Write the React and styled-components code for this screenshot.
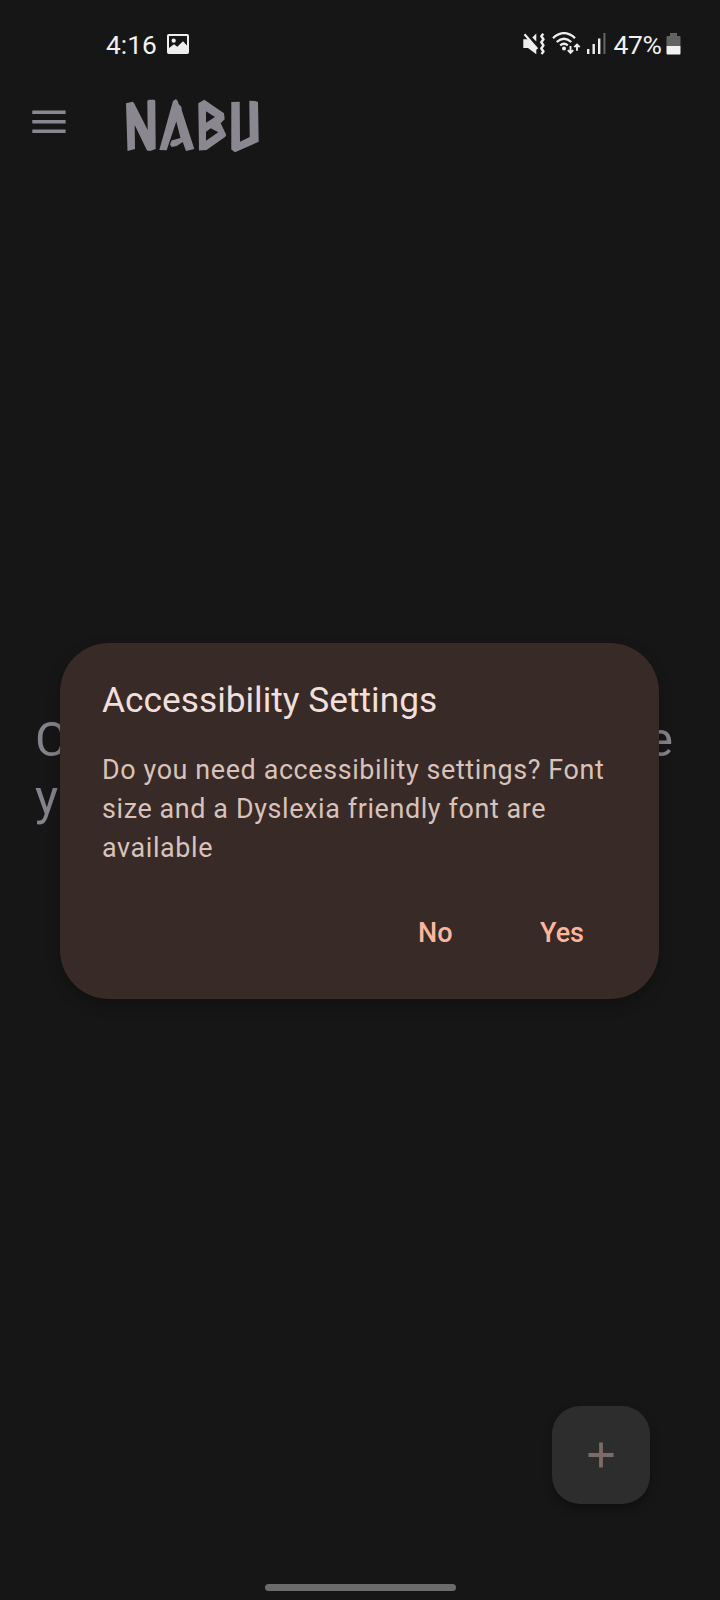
import React from "react";
import styled, { createGlobalStyle } from "styled-components";

const Global = createGlobalStyle`
  * { box-sizing: border-box; }
  body { margin: 0; background: #161616; font-family: Roboto, "Liberation Sans", sans-serif; }
`;

const Screen = styled.div`
  position: relative;
  width: 720px;
  height: 1600px;
  overflow: hidden;
  background: #161616;
  display: flex;
  flex-direction: column;
`;

const StatusBar = styled.div`
  height: 88px;
  flex: none;
  display: flex;
  align-items: center;
  padding: 0 39.5px 1px 106px;
  color: #f1f1f1;
  font-size: 26.3px;
`;

const Clock = styled.span`
  width: 51px;
  padding-top: 2px;
  white-space: nowrap;
`;

const StatusIcons = styled.div`
  margin-left: auto;
  display: flex;
  align-items: center;
`;

const Percent = styled.span`
  width: 49px;
  margin: 0 3px 0 8px;
  padding-top: 2px;
  font-size: 26.5px;
  letter-spacing: -0.4px;
`;

const Glyph = styled.svg`
  display: block;
  flex: none;
  margin-left: ${(p) => p.$gap || 0}px;
`;

const AppBar = styled.header`
  height: 76px;
  flex: none;
  display: flex;
  align-items: center;
  padding-left: 32px;
  color: #8b8790;
`;

const MenuButton = styled.button`
  border: 0;
  padding: 0;
  margin-bottom: 8px;
  background: none;
  color: inherit;
  display: flex;
`;

const Content = styled.main`
  flex: 1;
  padding: 547px 47px 0 35px;
  color: #85828a;
  font-size: 49px;
  line-height: 58px;
`;

const HintLine = styled.div`
  display: flex;
  justify-content: space-between;
`;

const Dialog = styled.section`
  position: absolute;
  left: 60px;
  top: 643px;
  width: 599px;
  height: 356px;
  padding: 36px 42px 0;
  border-radius: 49px;
  background: #382a26;
  box-shadow: 0 6px 14px rgba(0, 0, 0, 0.25);
`;

const Title = styled.h1`
  margin: 0;
  font-size: 35.3px;
  line-height: 42px;
  font-weight: 400;
  color: #f0dfda;
`;

const Message = styled.p`
  margin: 30px 0 0;
  font-size: 26.9px;
  line-height: 39px;
  letter-spacing: 0.62px;
  color: #d8c2bb;
  white-space: nowrap;
`;

const Actions = styled.div`
  display: flex;
  justify-content: flex-end;
  gap: 87.5px;
  padding: 46px 33px 0 0;
`;

const Action = styled.button`
  border: 0;
  padding: 0;
  background: none;
  color: #ffb59b;
  font: 500 27px/39px Roboto, sans-serif;
`;

const Fab = styled.button`
  position: absolute;
  right: 70px;
  bottom: 96px;
  width: 98px;
  height: 98px;
  border: 0;
  padding: 0;
  border-radius: 28px;
  background: #2d2d2d;
  box-shadow: 0 5px 10px rgba(0, 0, 0, 0.3);
  display: grid;
  place-items: center;
`;

const HomeBar = styled.div`
  width: 191px;
  height: 7px;
  flex: none;
  margin: 0 0 9px 264.5px;
  border-radius: 4px;
  background: #6b6b6b;
`;

function PictureIcon() {
  return (
    <Glyph $gap={10} width="22" height="20" viewBox="0 0 22 20">
      <rect x="1" y="1" width="20" height="18" rx="0.8" fill="none" stroke="#eee" strokeWidth="2" />
      <circle cx="6.7" cy="6.7" r="2.1" fill="#eee" />
      <path d="M2 14 7 10.300l3.300 2.500L16 7.300l4 4.200V18H2z" fill="#eee" />
    </Glyph>
  );
}

function MuteIcon() {
  return (
    <Glyph width="23" height="22" viewBox="0 0 23 22">
      <path d="M.3 6.200H5.500L13.300 15V21.300L5 15H.3zM9.300 4.500 13.300 .5v8.100z" fill="#eee" />
      <path d="M1.500 1.200 14.300 16" stroke="#eee" strokeWidth="2.200" />
      <path d="M20.300 .8 18.300 3.200 20.500 6.200 18.300 9.300 20.500 12.400 18.300 15.500 20.500 18.500 18.500 21" fill="none" stroke="#eee" strokeWidth="2.400" strokeLinejoin="round" />
    </Glyph>
  );
}

function WifiIcon() {
  return (
    <Glyph $gap={6} width="29" height="23" viewBox="0 0 29 23">
      <g fill="none" stroke="#eee" strokeWidth="2.3">
        <path d="M1 6.100Q12 -3.800 23 6.100" />
        <path d="M4.700 10Q12 3.600 19.300 10" />
        <path d="M8.200 13.300Q12 10.300 15.800 13.300" />
        <path d="M18.500 14v6.600M15.800 18.100l2.700 2.700 2.700-2.700M25 18.800v-6.100M22.300 15.200l2.700-2.700 2.700 2.700" strokeWidth="1.9" />
      </g>
      <circle cx="12" cy="16.500" r="2" fill="#eee" />
    </Glyph>
  );
}

function SignalIcon() {
  return (
    <Glyph $gap={6} width="19" height="21" viewBox="0 0 19 21">
      <path d="M0 16h2.400v5H0zM5.500 11h2.400v10H5.500zM11 5.500h2.400V21H11z" fill="#eee" />
      <path d="M16.400 0h2v21h-2z" fill="#666" />
    </Glyph>
  );
}

function BatteryIcon() {
  return (
    <Glyph width="15" height="22" viewBox="0 0 15 22">
      <path d="M4 0h7v3h2.500Q14.500 3 14.500 4v9H.5V4Q.5 3 1.500 3H4z" fill="#636363" />
      <path d="M.5 13h14v7.500q0 1-1 1h-12q-1 0-1-1z" fill="#f2f2f2" />
    </Glyph>
  );
}

function Logo() {
  return (
    <Glyph $gap={60} width="134" height="54" viewBox="0 0 134 54" fill="#8b8790" fillRule="evenodd">
      <path d="M0 4.300 6.700 2.700 8 4 21.700 31 21.300 1.700 23 .8 28.500 .8 29.300 2 29.700 50 24 52 21 51.500 8.700 26 9 50 1.500 52z" />
      <path d="M47 2 50 0 52 2.500 52.600 5 55.300 7.700 56 12 68.300 50 60 52 56.700 43 50.700 47 45.700 48 44 45.500 45.500 41.500 54.500 39 50.300 22.500 40.700 51.300 33.300 51z" />
      <path d="M72.300 4.300 78.300 .7 98 14.300 98.700 20.300 94.700 24.300 100.300 36 99 38 80.500 51 73 51.500zM80 12.300 80 23.700 89 18zM80 32.700 80 41.700 92.300 33.300 84.700 29.300z" />
      <path d="M105.300 3 113.700 2.700 114 42.700 123.700 38 123.300 1.700 129 2 132 3 132.700 42.700 109 53.300 105.300 50.500z" />
    </Glyph>
  );
}

export default function App() {
  return (
    <Screen>
      <Global />
      <StatusBar>
        <Clock>4:16</Clock>
        <PictureIcon />
        <StatusIcons>
          <MuteIcon />
          <WifiIcon />
          <SignalIcon />
          <Percent>47%</Percent>
          <BatteryIcon />
        </StatusIcons>
      </StatusBar>
      <AppBar>
        <MenuButton aria-label="Menu">
          <Glyph width="34" height="24" viewBox="0 0 34 24">
            <path d="M.3 2.200h33.300M.3 11.700h33.300M.3 21.200h33.300" stroke="currentColor" strokeWidth="3.6" />
          </Glyph>
        </MenuButton>
        <Logo />
      </AppBar>
      <Content>
        <HintLine><span>C</span><span>e</span></HintLine>
        <HintLine><span>y</span></HintLine>
      </Content>
      <HomeBar />
      <Fab aria-label="Add">
        <Glyph width="26" height="26" viewBox="0 0 26 26">
          <path d="M13 .5v25M.5 13h25" stroke="#7d6b65" strokeWidth="3.800" />
        </Glyph>
      </Fab>
      <Dialog role="dialog">
        <Title>Accessibility Settings</Title>
        <Message>
          Do you need accessibility settings? Font
          <br />
          size and a Dyslexia friendly font are
          <br />
          available
        </Message>
        <Actions>
          <Action>No</Action>
          <Action>Yes</Action>
        </Actions>
      </Dialog>
    </Screen>
  );
}
